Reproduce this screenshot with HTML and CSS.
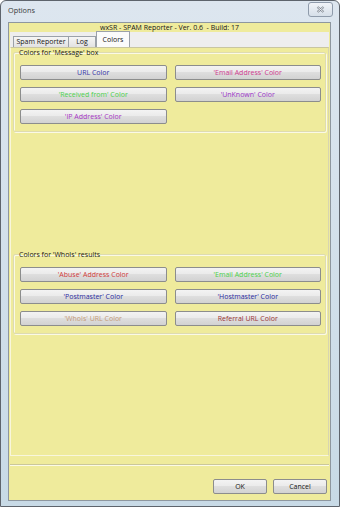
FILE: index.html
```html
<!DOCTYPE html>
<html lang="en">
<head>
    <meta charset="UTF-8">
    <title>Options</title>
    <link rel="stylesheet" href="styles.css">
</head>
<body>
    <div class="window">
        <div class="titlebar">
            <span class="title">Options</span>
            <span class="close">
                <svg width="9" height="7" viewBox="0 0 9 7">
                    <path d="M1.5 1 L7.5 6 M7.5 1 L1.5 6" stroke="#7d8590" stroke-width="2.2" fill="none"/>
                    <path d="M1.5 1 L7.5 6 M7.5 1 L1.5 6" stroke="#f4f6f8" stroke-width="0.9" fill="none"/>
                </svg>
            </span>
        </div>
        <div class="client">
            <div class="app-title">wxSR - SPAM Reporter - Ver. 0.6  - Build: 17</div>
            <div class="tabs">
                <span class="tab tab-spam">Spam Reporter</span>
                <span class="tab tab-log">Log</span>
                <span class="tab tab-colors active">Colors</span>
            </div>
            <div class="panel">
                <fieldset class="group">
                    <legend>Colors for 'Message' box</legend>
                    <div class="buttons">
                        <div class="btn c-url">URL Color</div>
                        <div class="btn c-email">'Email Address' Color</div>
                        <div class="btn c-received">'Received from' Color</div>
                        <div class="btn c-unknown">'UnKnown' Color</div>
                        <div class="btn c-ip">'IP Address' Color</div>
                    </div>
                </fieldset>
                <fieldset class="group group-whois">
                    <legend>Colors for 'WhoIs' results</legend>
                    <div class="buttons">
                        <div class="btn c-abuse">'Abuse' Address Color</div>
                        <div class="btn c-received">'Email Address' Color</div>
                        <div class="btn c-postmaster">'Postmaster' Color</div>
                        <div class="btn c-postmaster">'Hostmaster' Color</div>
                        <div class="btn c-whois">'WhoIs' URL Color</div>
                        <div class="btn c-referral">Referral URL Color</div>
                    </div>
                </fieldset>
            </div>
            <div class="separator"></div>
            <div class="actions">
                <div class="btn btn-dialog">OK</div>
                <div class="btn btn-dialog">Cancel</div>
            </div>
        </div>
    </div>
</body>
</html>
```

FILE: styles.css
```css
* {
    box-sizing: border-box;
}

html, body {
    margin: 0;
    padding: 0;
}

body {
    width: 340px;
    height: 507px;
    overflow: hidden;
    background: #ffffff;
    font-family: "Open Sans", "Noto Sans", sans-serif;
    font-size: 7px;
    color: #161616;
}

.window {
    width: 340px;
    height: 507px;
    display: flex;
    flex-direction: column;
    padding: 0 8px 5px 7px;
    background: linear-gradient(#dde6ef, #c8dae6);
    border: 1px solid #5e646c;
    border-radius: 6px 6px 0 0;
}

.titlebar {
    height: 21px;
    display: flex;
    justify-content: space-between;
    align-items: flex-start;
}

.title {
    font-size: 7.3px;
    line-height: 10px;
    padding-top: 4px;
    color: #3a3a3a;
}

.close {
    width: 25px;
    height: 15px;
    margin-top: 1px;
    margin-right: -2px;
    display: flex;
    justify-content: center;
    align-items: center;
    border: 1px solid #8f9bab;
    border-radius: 3px;
    background: linear-gradient(#f1f4f8, #d6dfe9);
}

.client {
    flex: 1;
    display: flex;
    flex-direction: column;
    background: #efeb9c;
    border: 1px solid #8e979f;
}

.app-title {
    height: 9px;
    line-height: 9px;
    text-align: center;
    white-space: pre;
}

.tabs {
    height: 15px;
    margin: 0 1px;
    padding-left: 3px;
    display: flex;
    align-items: flex-end;
    background: #eeeeee;
}

.tab {
    height: 11px;
    line-height: 10px;
    text-align: center;
    border: 1px solid #9ba1a9;
    border-bottom: none;
    background: linear-gradient(#f6f6f6, #e2e2e2);
}

.tab-spam {
    width: 56px;
}

.tab-log {
    width: 28px;
    margin-left: -1px;
}

.tab.active {
    width: 34px;
    height: 16px;
    padding-top: 3px;
    margin-left: 0;
    background: #fbfbfb;
}

.panel {
    height: 409px;
    margin: 0 1px;
    padding: 0 2px;
    border: 1px solid #f8f6dc;
    border-top-color: #c9c6a0;
    border-right-color: #d8d5b0;
}

.group {
    margin: 0;
    padding: 8px 4px 7px 6px;
    border: 1px solid #dedbb0;
    border-radius: 2px;
    box-shadow: inset 1px 1px 0 #faf9e6, 1px 1px 0 #faf9e6;
}

.group legend {
    padding: 0;
    margin-left: -1px;
    line-height: 9px;
}

.group-whois {
    margin-top: 118px;
}

.buttons {
    display: grid;
    grid-template-columns: 1fr 1fr;
    column-gap: 8px;
    row-gap: 7px;
}

.btn {
    height: 15px;
    line-height: 13px;
    text-align: center;
    border: 1px solid #8c8d8d;
    border-radius: 2px;
    background: linear-gradient(#f3f3f3 0%, #ebebeb 45%, #dedede 50%, #d2d2d2 100%);
}

.c-url { color: #3535a8; }
.c-email { color: #cf3a8f; }
.c-received { color: #4bd14b; }
.c-unknown { color: #9b36c8; }
.c-ip { color: #a735c5; }
.c-abuse { color: #d13a3a; }
.c-postmaster { color: #2a2aa0; }
.c-whois { color: #c49a78; }
.c-referral { color: #9a3535; }

.separator {
    height: 2px;
    margin: 8px 1px 0;
    border-top: 1px solid #cbc79a;
    border-bottom: 1px solid #fbfae6;
}

.actions {
    margin-top: 13px;
    padding-right: 3px;
    display: flex;
    justify-content: flex-end;
    gap: 6px;
}

.btn-dialog {
    width: 54px;
    color: #161616;
}
```
